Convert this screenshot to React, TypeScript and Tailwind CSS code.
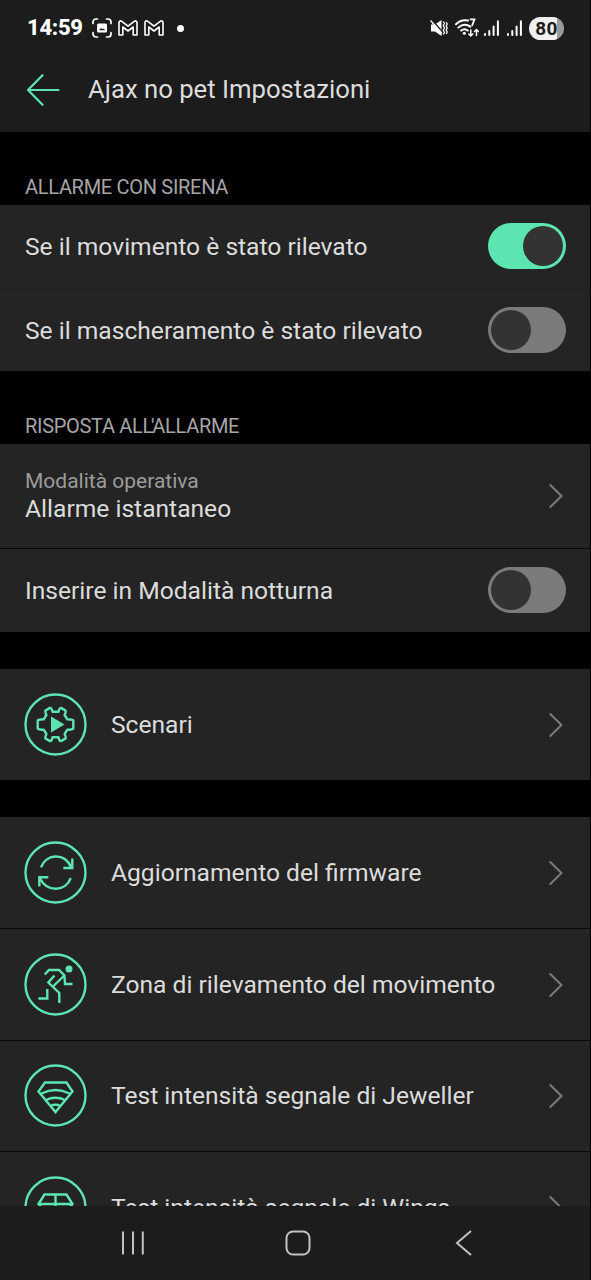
import type { ReactNode } from "react";
import { clsx } from "clsx";

function StatusBar() {
  return (
    <div className="flex h-14 items-center justify-between pl-[27px] pr-[26px] text-white">
      <div className="flex items-center">
        <span className="w-[56px] whitespace-nowrap text-[22px] leading-none font-extrabold tracking-[-0.3px]">14:59</span>
        {/* Screenshot saved */}
        <svg className="ml-[9px]" width="20" height="20" viewBox="0 0 20 20" fill="none" stroke="currentColor" strokeWidth="1.700" strokeLinecap="round">
          <path d="M1 5.500V4a3 3 0 0 1 3-3h1.500M14.500 1H16a3 3 0 0 1 3 3v1.500M19 14.500V16a3 3 0 0 1-3 3h-1.500M5.500 19H4a3 3 0 0 1-3-3v-1.500" />
          <rect x="5" y="5.500" width="10" height="9" rx="1.500" fill="currentColor" stroke="none" />
          <path d="M7 12.300l2-2.300 1.500 1.300 1.200-.9 1.500 1.900z" fill="#1c1c1c" stroke="none" />
        </svg>
        <MailGlyph className="ml-1.5" />
        <MailGlyph className="ml-1.5" />
        <span className="ml-[13px] size-[7px] rounded-full bg-white" />
      </div>
      <div className="flex items-center">
        {/* Muted, vibrating */}
        <svg width="18" height="18" viewBox="0 0 18 18" fill="none" stroke="currentColor">
          <path d="M1 5.500h4L11.500 1v16L5 12.500H1z" fill="currentColor" stroke="none" />
          <path d="M1.500 0.500L12.500 13" stroke="#1c1c1c" strokeWidth="1.600" />
          <path d="M0.500 1.500L12 14.500" strokeWidth="1.500" />
          <path d="M13.300 2.500l1.200 2-1.200 2 1.200 2.500-1.200 2.500 1.200 2-1.200 2M16.200 3l1 2-1 2 1 2-1 2 1 2-1 2" strokeWidth="1.300" />
        </svg>
        {/* Wi-Fi 7 */}
        <svg className="ml-[7px]" width="24" height="20" viewBox="0 0 24 20" fill="none" stroke="currentColor" strokeWidth="2" strokeLinecap="round">
          <path d="M1 6.200C4.500 2.700 9 1.700 13 2.600M3.300 9.600c3.400-3.400 8.300-3.900 12-1M6.200 12.600c2-1.700 4.500-1.700 6.500 0" />
          <circle cx="9.300" cy="15.300" r="1.500" fill="currentColor" stroke="none" />
          <path d="M15.500 1.300h4l-2.300 6" strokeWidth="1.800" />
          <path d="M15.800 12v6M13.800 16l2 2 2-2M21.500 17.500v-6M19.500 13.500l2-2 2 2" strokeWidth="1.500" />
        </svg>
        <SignalBars className="ml-[5px]" />
        <SignalBars className="ml-2" />
        <span className="ml-[7px] flex h-[23px] w-[35px] items-center justify-center rounded-full bg-[linear-gradient(90deg,#efefef_0_28px,#9a9a9a_28px)] text-[19px] leading-none font-bold tracking-[0.3px] text-[#1c1c1c]">
          80
        </span>
      </div>
    </div>
  );
}

function MailGlyph({ className }: { className?: string }) {
  return (
    <svg className={className} width="20" height="16" viewBox="0 0 20 16" fill="none" stroke="currentColor" strokeWidth="1.600" strokeLinejoin="round">
      <path d="M1 15V2.500C1 .8 2.700.5 3.800 1.400L10 6.200l6.200-4.800C17.300.5 19 .8 19 2.500V15h-3.800V7L10 11 4.800 7v8z" />
    </svg>
  );
}

function SignalBars({ className }: { className?: string }) {
  return (
    <svg className={className} width="15" height="16" viewBox="0 0 15 16" fill="none" stroke="currentColor" strokeWidth="2" strokeLinecap="round">
      <path d="M1 14v1M5.300 11v4M9.600 6.500V15M13.900 1.200V15" />
    </svg>
  );
}

function Header() {
  return (
    <header className="h-[132px] shrink-0 bg-[#1c1c1c]">
      <StatusBar />
      <div className="flex h-[68px] items-center pl-[27px]">
        <svg width="33" height="32" viewBox="0 0 33 32" fill="none" stroke="#5ce5b1" strokeWidth="2.200" strokeLinecap="round" strokeLinejoin="round">
          <path d="M31.500 16H1M15.500 1.200L1 16l14.500 14.800" />
        </svg>
        <h1 className="ml-7 text-[25.700px] leading-none text-[#dcdcdc]">Ajax no pet Impostazioni</h1>
      </div>
    </header>
  );
}

function SectionTitle({ children }: { children: ReactNode }) {
  return (
    <h2 className="flex h-[73px] items-end pb-[8px] pl-[25px] text-[20px] leading-5 tracking-[-0.3px] text-[#a6a6a6]">
      {children}
    </h2>
  );
}

function Group({ children }: { children: ReactNode }) {
  return <section className="flex flex-col bg-[#242424]">{children}</section>;
}

function Toggle({ on }: { on?: boolean }) {
  return (
    <button
      role="switch"
      aria-checked={!!on}
      className={clsx(
        "flex h-[46px] w-[78px] items-center rounded-full p-[3px]",
        on ? "justify-end bg-[#5ce5b1]" : "bg-[#7b7b7b]"
      )}
    >
      <span className="size-10 rounded-full bg-[#333333]" />
    </button>
  );
}

function Chevron() {
  return (
    <svg className="mr-[3px]" width="15" height="24" viewBox="0 0 15 24" fill="none" stroke="#7d7d7d" strokeWidth="1.900" strokeLinecap="round" strokeLinejoin="round">
      <path d="M2.300 1L13.500 12 2.300 23" />
    </svg>
  );
}

function ToggleRow({ label, on, last }: { label: string; on?: boolean; last?: boolean }) {
  return (
    <div className={clsx("flex items-start justify-between pt-[18px] pl-[25px] pr-6", last ? "h-[82px]" : "h-[83px]")}>
      <span className="text-[24.600px] leading-[47px] text-[#dcdcdc]">{label}</span>
      <Toggle on={on} />
    </div>
  );
}

function LinkRow({ label, icon, short }: { label: string; icon: ReactNode; short?: boolean }) {
  return (
    <a className={clsx("flex items-start pl-6 pr-6", short ? "h-[110px] pt-[23px]" : "h-[111px] pt-6")}>
      <svg width="63" height="63" viewBox="0 0 63 63" fill="none" stroke="#5ce5b1" strokeWidth="2.400">
        <circle cx="31.500" cy="31.500" r="30" />
        {icon}
      </svg>
      <div className="ml-6 flex h-[63px] flex-1 items-center">
        <span className="flex-1 whitespace-nowrap text-[24.600px] leading-[63px] text-[#dcdcdc]">{label}</span>
        <Chevron />
      </div>
    </a>
  );
}

function Divider({ faint }: { faint?: boolean }) {
  return <div className={clsx("h-px shrink-0", faint ? "bg-[#1f1f1f]" : "bg-[#0a0a0a]")} />;
}

const scenarioIcon = (
  <>
    <path
      strokeLinejoin="round"
      d="M28.500 18.800h6Q35.200 14.900 37 14.900L41.600 17.600Q42.200 18.500 40.600 22L43.300 26.300Q48.500 26.300 49.300 27.500V35.500Q48.500 36.700 43.300 36.700L40.600 41Q42.200 44.500 41.600 45.400L37 48.100Q35.200 48.100 34.500 44.200H28.500Q27.800 48.100 26 48.100L21.400 45.400Q20.800 44.500 22.400 41L19.700 36.700Q14.500 36.700 13.700 35.500V27.500Q14.500 26.300 19.700 26.300L22.400 22Q20.800 18.500 21.400 17.600L26 14.900Q27.800 14.900 28.500 18.800z"
    />
    <path d="M27 23.500v16l13.500-8z" fill="#5ce5b1" stroke="none" />
  </>
);

const updateIcon = (
  <path d="M17 26.300C22 12.500 40.500 11.500 47 26M39.300 27h9V17.500M46.700 37C42 50.500 23.500 52 16 37.500M15.300 45.500v-9.200h9" />
);

const motionIcon = (
  <>
    <circle cx="45" cy="16" r="3.500" fill="#5ce5b1" stroke="none" />
    <path d="M20.700 21.500l4.300-4.500h10l5.500 5.500L41 31h7.500M40.300 22.500L29 33.500M30.500 22.500l-6.200 7 11 10.500V50M23.300 36v9.500h-9" />
  </>
);

const jewellerIcon = (
  <path d="M21 18.500h21.500l6 9-17 20.500-17-20.500zM17.500 29.500q14-7 28 0M22 36q9.500-4.500 19 0M26.500 42q5-2.500 10 0" />
);

const wingsIcon = (
  <path d="M20.500 18.500h22l6 9.500-17 20-17-20zM14.500 28h34M31.500 18.500V48" />
);

function NavBar() {
  return (
    <nav className="flex h-[74px] shrink-0 items-center bg-[#1c1c1c] pl-[121px]">
      <svg width="24" height="24" viewBox="0 0 24 24" fill="none" stroke="#c2c2c2" strokeWidth="2">
        <path d="M2 .5v23M12 .5v23M21.800 .5v23" />
      </svg>
      <svg className="ml-[140px]" width="26" height="26" viewBox="0 0 26 26" fill="none" stroke="#c2c2c2" strokeWidth="2">
        <rect x="1.500" y="1.500" width="23" height="23" rx="6.500" />
      </svg>
      <svg className="ml-[144px]" width="17" height="26" viewBox="0 0 17 26" fill="none" stroke="#c2c2c2" strokeWidth="2">
        <path d="M16 1L2 13l14 12" />
      </svg>
    </nav>
  );
}

export default function App() {
  return (
    <div className="flex h-[1280px] w-[591px] flex-col overflow-hidden bg-black pr-px font-['Roboto',sans-serif]">
      <Header />
      <main className="min-h-0 flex-1 overflow-hidden">
        <SectionTitle>ALLARME CON SIRENA</SectionTitle>
        <Group>
          <ToggleRow label="Se il movimento è stato rilevato" on />
          <Divider faint />
          <ToggleRow label="Se il mascheramento è stato rilevato" last />
        </Group>

        <SectionTitle>
          {/* tighter pair kerning around the apostrophe */}
          <span className="whitespace-nowrap">
            RISPOSTA AL<span className="tracking-[-2.300px]">L'</span>ALLARME
          </span>
        </SectionTitle>
        <Group>
          <a className="flex h-[104px] items-center justify-between pl-[25px] pr-6">
            <div className="flex flex-col pb-px">
              <span className="text-[21px] leading-[27px] text-[#9c9c9c]">Modalità operativa</span>
              <span className="text-[24.600px] leading-[28px] text-[#dcdcdc]">Allarme istantaneo</span>
            </div>
            <Chevron />
          </a>
          <Divider />
          <ToggleRow label="Inserire in Modalità notturna" />
        </Group>

        <div className="h-[37px]" />
        <Group>
          <LinkRow label="Scenari" icon={scenarioIcon} />
        </Group>

        <div className="h-[37px]" />
        <Group>
          <LinkRow label="Aggiornamento del firmware" icon={updateIcon} />
          <Divider />
          <LinkRow label="Zona di rilevamento del movimento" icon={motionIcon} />
          <Divider />
          <LinkRow label="Test intensità segnale di Jeweller" icon={jewellerIcon} short />
          <Divider />
          <LinkRow label="Test intensità segnale di Wings" icon={wingsIcon} />
        </Group>
      </main>
      <NavBar />
    </div>
  );
}
